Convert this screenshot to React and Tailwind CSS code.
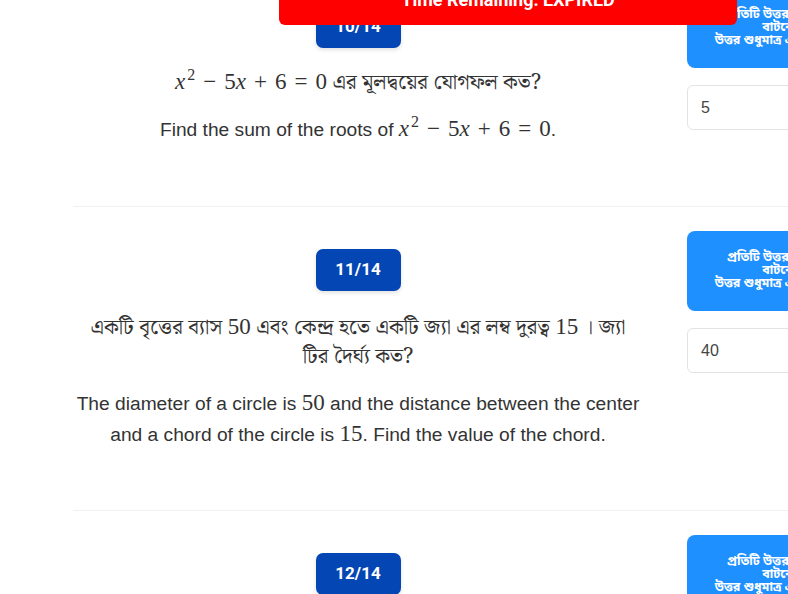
import React from "react";

const bn = { fontFamily: '"Noto Serif Bengali","Noto Sans Bengali","Lohit Bengali","Noto Sans","Liberation Serif",serif' };
const bnSans = { fontFamily: '"Noto Sans Bengali","Lohit Bengali","Noto Sans",sans-serif' };
const en = { fontFamily: '"Liberation Sans",Arial,sans-serif' };

function X() {
  return <i className="font-normal">x</i>;
}

function M({ children }) {
  return <span className="text-[23px] whitespace-nowrap" style={{ fontFamily: '"Liberation Serif","DejaVu Serif",serif' }}>{children}</span>;
}

function Eq() {
  return (
    <M>
      <X /><span className="text-[16px] leading-none relative -top-[9px] ml-[2px]">2</span>
      <span className="mx-[8px]">−</span>5<X />
      <span className="mx-[8px]">+</span>6
      <span className="mx-[8px]">=</span>0
    </M>
  );
}

function Row({ n, border, children, value, pb = "pb-[60px]" }) {
  return (
    <div className={"flex " + (border ? "border-t border-[#f0f0f0]" : "border-t border-transparent")}>
      <div className={"w-[570px] shrink-0 px-[3px] pt-[42px] flex flex-col items-center text-center text-[#333] " + pb}>
        <div className="w-[85px] h-[42px] rounded-[7px] bg-[#0546b5] shadow-[0_2px_4px_rgba(0,0,0,0.12)] flex items-center justify-center text-white font-bold text-[17px]" style={{ fontFamily: 'Roboto,"Noto Sans",sans-serif' }}>
          {n}
        </div>
        {children}
      </div>
      <div className="ml-[44px] w-[212px] shrink-0 pt-[24px]">
        <div className="h-[80px] rounded-[8px] bg-[#1e90ff] text-white font-bold text-[12.5px] leading-[12px] flex flex-col items-center justify-center text-center px-1" style={bnSans}>
          <div>প্রতিটি উত্তর লিখে সাবমিট</div>
          <div className="mt-[1px]">বাটনে চাপুন</div>
          <div className="mt-[1px]">উত্তর শুধুমাত্র একবার জমা হবে</div>
        </div>
        <div className="mt-[17px] h-[45px] rounded-[6px] border border-[#e3e3e3] flex items-center pl-[13px] text-[16px] text-[#444]" style={en}>
          {value}
        </div>
      </div>
    </div>
  );
}

export default function App() {
  return (
    <div className="relative w-[788px] h-[594px] overflow-hidden bg-white">
      <div className="-mt-[37px] ml-[73px]">
        <Row n="10/14" value="5" pb="pb-[61px]">
          <div className="mt-[19px] text-[21px] leading-[29px]" style={bn}>
            <Eq /> এর মূলদ্বয়ের যোগফল কত?
          </div>
          <div className="mt-[16px] text-[19.2px] leading-[30px]" style={en}>
            Find the sum of the roots of <Eq />.
          </div>
        </Row>
        <Row n="11/14" border value="40">
          <div className="mt-[21px] text-[21px] leading-[29px]" style={bn}>
            একটি বৃত্তের ব্যাস <M>50</M> এবং কেন্দ্র হতে একটি জ্যা এর লম্ব দুরত্ব <M>15</M> । জ্যা টির দৈর্ঘ্য কত?
          </div>
          <div className="mt-[16px] text-[19.2px] leading-[30px]" style={en}>
            The diameter of a circle is <M>50</M> and the distance between the center and a chord of the circle is <M>15</M>. Find the value of the chord.
          </div>
        </Row>
        <Row n="12/14" border value="">
          <div className="h-[100px]" />
        </Row>
      </div>
      <div className="absolute left-[279px] top-[-20px] w-[458px] h-[45px] rounded-b-[6px] bg-[#ff0000] text-white font-bold text-[18px] leading-[24px] text-center pt-[8px]" style={{ fontFamily: 'Roboto,"Noto Sans",sans-serif' }}>
        Time Remaining: EXPIRED
      </div>
    </div>
  );
}
